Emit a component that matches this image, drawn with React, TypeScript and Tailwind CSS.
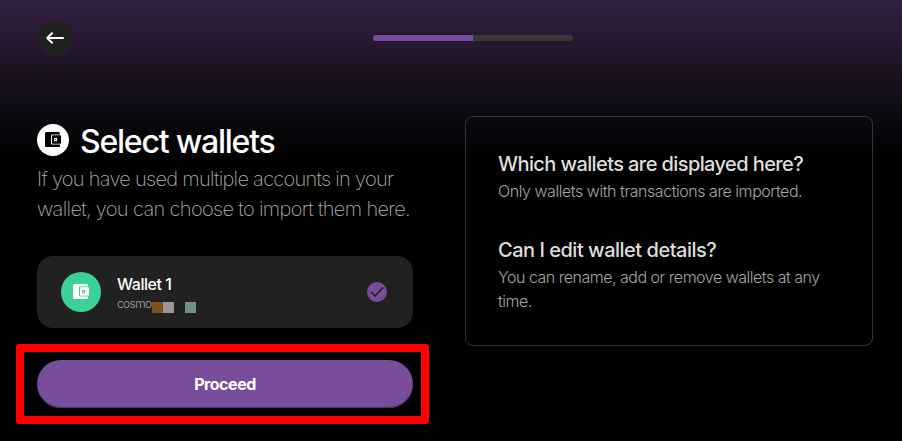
import React from "react";

function WalletIcon({ body, pocket }: { body: string; pocket: string }) {
  return (
    <svg viewBox="0 0 16 16" className="size-4">
      <path fill={body} d="M1.5 0H13.5Q15 0 15 1.5V13.5Q15 15 13.5 15H1.5Q0 15 0 13.5V1.5Q0 0 1.5 0Z" />
      <path fill={pocket} d="M16 2.4H7Q6 2.4 6 3.4V11.6Q6 12.6 7 12.6H16Z" />
      <rect x="7" y="3.2" width="9" height="8.6" rx=".8" fill={body} />
      <rect x="9" y="6" width="3.2" height="3.2" rx=".6" fill={pocket} />
      <rect x="10.1" y="7.1" width="1" height="1" fill={body} />
    </svg>
  );
}

export default function App() {
  return (
    <main className="h-[441px] w-[902px] overflow-hidden bg-black bg-[linear-gradient(180deg,#312040_0px,#261830_45px,#1a1320_70px,#0f0b14_105px,#000_156px)] font-['Inter',sans-serif]">
      <header className="flex h-[116px] items-start pl-[37px] pt-5">
        <button className="flex size-9 items-center justify-center rounded-full bg-[#212121]">
          <svg viewBox="0 0 18 12" className="h-3 w-[18px]" fill="none" stroke="#fff" strokeWidth="2" strokeLinecap="round" strokeLinejoin="round">
            <path d="M17 6H1.5M6 1.3L1.3 6L6 10.7" />
          </svg>
        </button>
        <div className="ml-[300px] mt-[15px] flex h-1.5 w-[200px] overflow-hidden rounded-full bg-[#383838]">
          <div className="w-1/2 bg-[#784e9b]" />
        </div>
      </header>
      <div className="flex items-start">
        <section className="flex w-[449px] shrink-0 flex-col pl-4">
          <div className="mt-2 flex h-8 items-center pl-[21px]">
            <div className="flex size-8 items-center justify-center rounded-full bg-white">
              <WalletIcon body="#000" pocket="#fff" />
            </div>
            <h1 className="ml-[11px] whitespace-nowrap pt-[3px] text-[32px] font-medium leading-8 tracking-[-1.22px] text-white">Select wallets</h1>
          </div>
          <p className="mt-2 whitespace-nowrap pl-[21px] text-[20px] font-extralight leading-[30px] text-[#b0b0b0]">
            <span className="block w-fit tracking-[-0.72px]">If you have used multiple accounts in your</span>
            <span className="block w-fit tracking-[-0.65px]">wallet, you can choose to import them here.</span>
          </p>
          <div className="ml-[21px] mt-8 flex h-[72px] w-[376px] items-center rounded-2xl bg-[#212121] px-6">
            <div className="flex size-10 items-center justify-center rounded-full bg-[#3bd197]">
              <WalletIcon body="#fff" pocket="#3bd197" />
            </div>
            <div className="ml-4">
              <div className="whitespace-nowrap text-[16px] font-medium leading-6 tracking-[-0.45px] text-white">Wallet 1</div>
              <div className="flex h-4 text-[12px] font-light leading-4 tracking-[-0.6px] text-[#a5a5a5]">
                <span className="w-[35px] whitespace-nowrap">cosmo</span>
                <span className="mt-[6px] h-[11px] w-[11px] bg-[#805219]" />
                <span className="mt-[6px] h-[11px] w-[11px] bg-[#9c9696]" />
                <span className="ml-[11px] mt-[6px] h-[11px] w-[11px] bg-[#6f9282]" />
              </div>
            </div>
            <svg viewBox="0 0 20 20" className="ml-auto mr-0.5 size-5">
              <circle cx="10" cy="10" r="10" fill="#784e9b" />
              <path d="M4 10L8 14L16 5.7" stroke="#212121" strokeWidth="1.7" fill="none" />
            </svg>
          </div>
          <div className="mt-4 flex h-20 w-[413px] items-center rounded-[3px] border-8 border-[#ff0000] pl-[13px]">
            <button className="h-12 w-[376px] shrink-0 rounded-full bg-[#784e9b] text-[16px] font-bold tracking-[-0.45px] text-white shadow-[inset_0_-1px_1px_#4c3163]">
              Proceed
            </button>
          </div>
        </section>
        <aside className="ml-4 h-[230px] w-[408px] rounded-lg border border-[#353535] px-8 pt-8">
          <h2 className="whitespace-nowrap text-[20px] font-medium leading-[30px] tracking-[-0.6px] text-[#dedede]">Which wallets are displayed here?</h2>
          <p className="whitespace-nowrap text-[16px] font-light leading-6 tracking-[-0.45px] text-[#a5a5a5]">Only wallets with transactions are imported.</p>
          <h2 className="mt-8 whitespace-nowrap text-[20px] font-medium leading-[30px] tracking-[-0.49px] text-[#dedede]">Can I edit wallet details?</h2>
          <p className="whitespace-nowrap text-[16px] font-light leading-6 tracking-[-0.49px] text-[#a5a5a5]">
            <span className="block w-fit">You can rename, add or remove wallets at any</span>
            <span className="block w-fit">time.</span>
          </p>
        </aside>
      </div>
    </main>
  );
}
